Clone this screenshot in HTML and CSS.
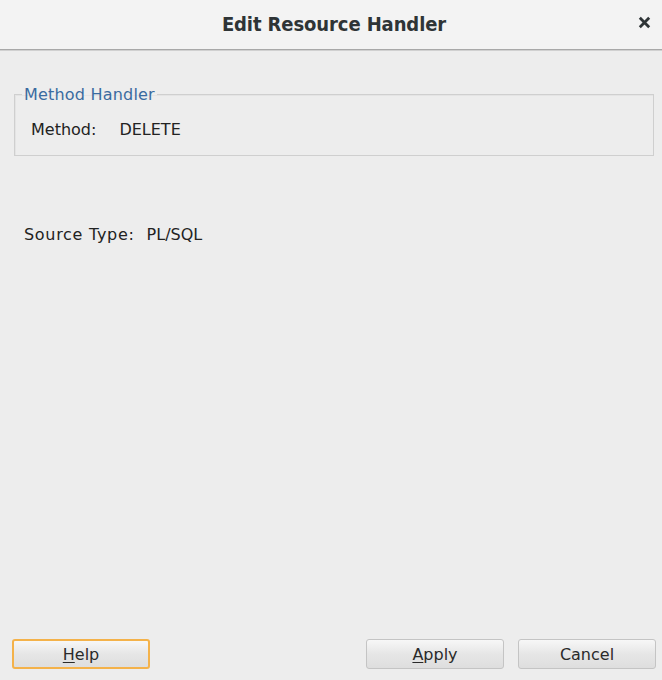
FILE: index.html
```html
<!DOCTYPE html>
<html>
<head>
<meta charset="utf-8">
<link rel="stylesheet" href="styles.css">
</head>
<body>
<div class="dialog">
  <header class="titlebar">
    <div class="title">Edit Resource Handler</div>
    <div class="close">
      <svg width="13" height="13" viewBox="0 0 13 13"><path d="M1.8 1.8 L11.2 11.2 M11.2 1.8 L1.8 11.2" stroke="#2e3436" stroke-width="2.8" stroke-linecap="butt"/></svg>
    </div>
  </header>
  <main class="content">
    <fieldset class="group">
      <legend class="legend">Method Handler</legend>
      <div class="row"><span class="label">Method:</span><span class="value">DELETE</span></div>
    </fieldset>
    <div class="source"><span class="label">Source Type:</span><span class="value">PL/SQL</span></div>
  </main>
  <footer class="buttons">
    <button class="btn focused"><u>H</u>elp</button>
    <div class="spacer"></div>
    <button class="btn"><u>A</u>pply</button>
    <button class="btn">Cancel</button>
  </footer>
</div>
</body>
</html>
```
FILE: styles.css
```css
html, body {
  margin: 0;
  padding: 0;
  height: 100%;
  background: #ededed;
}
.dialog {
  display: flex;
  flex-direction: column;
  height: 680px;
  font-family: "DejaVu Sans", sans-serif;
  font-size: 16px;
  line-height: 19px;
  color: #222;
}
.titlebar {
  height: 49px;
  background: #f3f3f3;
  border-bottom: 1px solid #a8a8a8;
  box-shadow: 0 1px 0 #d0d0d0;
  display: flex;
  align-items: center;
  justify-content: center;
  position: relative;
}
.title {
  font-family: "DejaVu Sans Condensed", "DejaVu Sans", sans-serif;
  font-weight: bold;
  font-size: 20px;
  color: #2e3436;
  margin-left: 6px;
  letter-spacing: -0.1px;
}
.close {
  position: absolute;
  right: 11px;
  top: 16px;
  width: 13px;
  height: 13px;
  display: flex;
}
.content {
  flex: 1;
  padding: 35px 8px 0 14px;
}
.group {
  margin: 0;
  border: 1px solid #cfcfcf;
  box-shadow: inset 1px 1px 0 #e4e4e4;
  padding: 16px 16px 16px 16px;
}
.legend {
  color: #3a6ba0;
  padding: 0 2px;
  margin-left: -9px;
  font-size: 16px;
  letter-spacing: 0.2px;
}
.row {
  display: flex;
  gap: 23px;
}
.source {
  display: flex;
  gap: 12px;
  margin: 69px 0 0 10px;
}
.source .label {
  letter-spacing: 0.7px;
}
.buttons {
  display: flex;
  align-items: center;
  gap: 14px;
  padding: 0 6px 11px 12px;
}
.spacer {
  flex: 1;
}
.btn {
  width: 138px;
  height: 30px;
  border: 1px solid #c4c4c4;
  border-radius: 3px;
  background: linear-gradient(#f7f7f7, #e6e6e6 50%, #dedede);
  font-family: "DejaVu Sans", sans-serif;
  font-size: 16px;
  color: #2a2a2a;
  padding: 0;
}
.btn.focused {
  border: 2px solid #f4b24a;
  margin-right: 1px;
}
.btn u {
  text-underline-offset: 2px;
}
```
